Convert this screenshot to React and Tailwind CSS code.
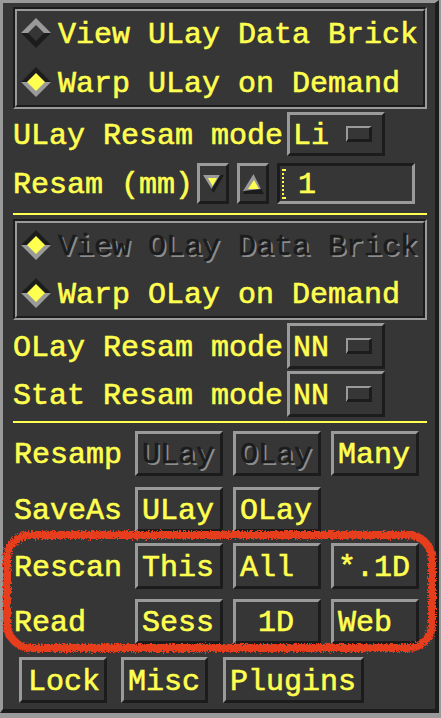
import React from "react";

const Y = "text-[#ffff50]";
const OUT =
  "border-[3px] border-t-[#9a9a9a] border-l-[#9a9a9a] border-r-[#1c1c1c] border-b-[#1c1c1c]";
const DIM = "text-[#1c1c1c] [text-shadow:2px_2px_0_#8c8c8c]";

function Diamond({ on }) {
  const a = on ? 6 : 7;
  return (
    <svg width="30" height="30" viewBox="0 0 30 30" className="shrink-0">
      <polygon points="15,0 30,15 0,15" fill={on ? "#1c1c1c" : "#9a9a9a"} />
      <polygon points="0,15 30,15 15,30" fill={on ? "#9a9a9a" : "#1c1c1c"} />
      <polygon
        points={`15,${a} ${30 - a},15 15,${30 - a} ${a},15`}
        fill={on ? "#ffff50" : "#363636"}
      />
    </svg>
  );
}

function Frame({ children, className }) {
  // etched-in frame
  return (
    <div
      className={`border-2 border-t-[#1c1c1c] border-l-[#1c1c1c] border-r-[#9a9a9a] border-b-[#9a9a9a] ${className}`}
    >
      <div className="h-full border-2 border-t-[#9a9a9a] border-l-[#9a9a9a] border-r-[#1c1c1c] border-b-[#1c1c1c]">
        {children}
      </div>
    </div>
  );
}

function Radio({ on, dim, children, className }) {
  return (
    <div className={`flex items-center pl-[4px] gap-[7px] ${className}`}>
      <Diamond on={on} />
      <span className={`pt-[3px] ${dim ? DIM : Y}`}>{children}</span>
    </div>
  );
}

function OptionMenu({ value }) {
  return (
    <div className={`w-[98px] h-full flex items-center pl-[3px] ${OUT}`}>
      <span className={`w-[53px] pt-[3px] ${Y}`}>{value}</span>
      <div className="w-[26px] h-[16px] border-t-2 border-l-2 border-r-[3px] border-b-[3px] border-t-[#9a9a9a] border-l-[#9a9a9a] border-r-[#1c1c1c] border-b-[#1c1c1c]" />
    </div>
  );
}

function Btn({ children, dim, w = "w-[88px]", h = "h-[45px]", pl = "pl-[4px]" }) {
  return (
    <div className={`${w} ${h} flex items-center ${pl} ${OUT}`}>
      <span className={`pt-[3px] whitespace-pre ${dim ? DIM : Y}`}>{children}</span>
    </div>
  );
}

function Row({ label, children, className }) {
  return (
    <div className={`flex items-center pl-[1px] ${className}`}>
      <span className={`w-[121px] pt-[3px] ${Y}`}>{label}</span>
      <div className="flex gap-[10px]">{children}</div>
    </div>
  );
}

function DownArrow() {
  return (
    <svg width="21" height="18" viewBox="0 0 21 18">
      <polygon points="0,0 21,0 10.5,18" fill="#1c1c1c" />
      <polygon points="0,0 17,0 8.5,14" fill="#9a9a9a" />
      <polygon points="5,3 14,3 9.5,11" fill="#ffff50" />
    </svg>
  );
}

function UpArrow() {
  return (
    <svg width="21" height="20" viewBox="0 0 21 20">
      <polygon points="10.5,0 21,20 0,20" fill="#1c1c1c" />
      <polygon points="10.5,0 18,15 0,17" fill="#9a9a9a" />
      <polygon points="11,6 16,15 5,15" fill="#ffff50" />
    </svg>
  );
}

function Separator({ className }) {
  return <div className={`h-[2px] w-[414px] bg-[#ffff50] ${className}`} />;
}

export default function App() {
  return (
    <div className="w-[441px] h-[718px] overflow-hidden bg-[#9a9a9a] pr-[2px] pb-[5px] font-['Liberation_Mono','DejaVu_Sans_Mono',monospace] text-[30px] leading-[30px] [-webkit-text-stroke:0.6px_currentColor] relative">
      <div className="h-full bg-[#363636] border-t-[3px] border-l-[3px] border-r-[4px] border-b-[4px] border-t-[#9a9a9a] border-l-[#9a9a9a] border-r-[#1c1c1c] border-b-[#1c1c1c] pl-[10px] flex flex-col">
        {/* ULay section */}
        <Frame className="mt-[4px] w-[414px] h-[102px]">
          <Radio className="h-[44px]">View ULay Data Brick</Radio>
          <Radio on className="mt-[4px] h-[46px]">
            Warp ULay on Demand
          </Radio>
        </Frame>

        <div className="mt-[3px] h-[44px] flex items-center">
          <span className={`w-[274px] pt-[3px] ${Y}`}>ULay Resam mode</span>
          <OptionMenu value="Li" />
        </div>

        <div className="mt-[7px] h-[41px] flex items-center">
          <span className={`w-[184px] pt-[3px] ${Y}`}>Resam (mm)</span>
          <div className={`w-[32px] h-full flex items-center justify-center ${OUT}`}>
            <DownArrow />
          </div>
          <div className={`ml-[8px] w-[32px] h-full flex items-center justify-center ${OUT}`}>
            <UpArrow />
          </div>
          <div className="ml-[8px] w-[138px] h-full flex items-center border-[3px] border-t-[#1c1c1c] border-l-[#1c1c1c] border-r-[#9a9a9a] border-b-[#9a9a9a]">
            <svg width="6" height="30" viewBox="0 0 6 30" className="ml-[2px] shrink-0">
              <rect x="0" y="0" width="4" height="2" fill="#ffff50" />
              <rect x="0" y="4" width="2" height="2" fill="#ffff50" />
              <rect x="0" y="8" width="2" height="2" fill="#ffff50" />
              <rect x="0" y="12" width="2" height="2" fill="#ffff50" />
              <rect x="0" y="16" width="2" height="2" fill="#ffff50" />
              <rect x="0" y="20" width="2" height="2" fill="#ffff50" />
              <rect x="0" y="24" width="2" height="2" fill="#ffff50" />
              <rect x="0" y="28" width="4" height="2" fill="#ffff50" />
            </svg>
            <span className={`ml-[10px] pt-[3px] ${Y}`}>1</span>
          </div>
        </div>

        <Separator className="mt-[9px]" />

        {/* OLay section */}
        <Frame className="mt-[4px] w-[414px] h-[101px]">
          <Radio on dim className="h-[44px]">
            View OLay Data Brick
          </Radio>
          <Radio on className="mt-[3px] h-[46px]">
            Warp OLay on Demand
          </Radio>
        </Frame>

        <div className="mt-[3px] h-[46px] flex items-center">
          <span className={`w-[274px] pt-[3px] ${Y}`}>OLay Resam mode</span>
          <OptionMenu value="NN" />
        </div>
        <div className="mt-[2px] h-[46px] flex items-center">
          <span className={`w-[274px] pt-[3px] ${Y}`}>Stat Resam mode</span>
          <OptionMenu value="NN" />
        </div>

        <Separator className="mt-[4px]" />

        {/* Buttons */}
        <Row label="Resamp" className="mt-[8px]">
          <Btn dim>ULay</Btn>
          <Btn dim>OLay</Btn>
          <Btn>Many</Btn>
        </Row>
        <Row label="SaveAs" className="mt-[11px]">
          <Btn>ULay</Btn>
          <Btn>OLay</Btn>
        </Row>
        <Row label="Rescan" className="mt-[11px]">
          <Btn h="h-[46px]">This</Btn>
          <Btn h="h-[46px]">All</Btn>
          <Btn h="h-[46px]">*.1D</Btn>
        </Row>
        <Row label="Read" className="mt-[10px]">
          <Btn>Sess</Btn>
          <Btn> 1D</Btn>
          <Btn>Web</Btn>
        </Row>

        <div className="mt-[13px] pl-[6px] flex">
          <Btn h="h-[46px]" pl="pl-[6px]">Lock</Btn>
          <div className="ml-[14px]">
            <Btn w="w-[87px]" h="h-[46px]">Misc</Btn>
          </div>
          <div className="ml-[15px]">
            <Btn w="w-[141px]" h="h-[46px]">Plugins</Btn>
          </div>
        </div>
      </div>

      {/* hand-drawn red annotation */}
      <svg
        className="absolute left-0 top-0 pointer-events-none"
        width="441"
        height="718"
        viewBox="0 0 441 718"
      >
        <defs>
          <filter id="rough" x="-5%" y="-20%" width="110%" height="140%">
            <feTurbulence type="fractalNoise" baseFrequency="0.6" numOctaves="3" seed="4" result="n" />
            <feDisplacementMap in="SourceGraphic" in2="n" scale="6" />
          </filter>
        </defs>
        <rect
          x="7"
          y="535"
          width="425"
          height="113"
          rx="24"
          fill="none"
          stroke="#e63c1e"
          strokeWidth="8"
          filter="url(#rough)"
        />
      </svg>
    </div>
  );
}
